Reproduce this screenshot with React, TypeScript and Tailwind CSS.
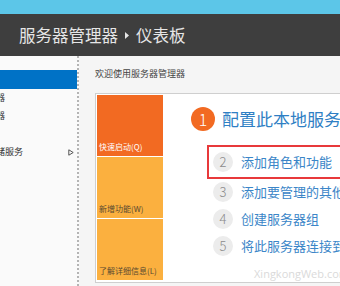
import React from "react";

const font = { fontFamily: '"Noto Sans CJK SC", "Noto Sans", sans-serif' };

function Sidebar() {
  const items = ["仪表板", "本地服务器", "所有服务器", "IIS", "文件和存储服务"];
  return (
    <div className="w-[79px] shrink-0 bg-[#fafafa] border-r-2 border-dotted border-[#b4b4b4] pt-[14px] overflow-hidden">
      {items.map((t, i) => (
        <div
          key={t}
          className={
            "relative h-[18px] flex items-center text-[9px] whitespace-nowrap " +
            (i === 0 ? "bg-[#0072c6] text-white h-[19px]" : "text-[#333]")
          }
        >
          <span className="ml-[-40px]">{t}</span>
          {i === 4 && (
            <svg className="absolute left-[68px] top-[6px]" width="6" height="7" viewBox="0 0 6 7">
              <path d="M0.8 0.8 L5.2 3.5 L0.8 6.2 Z" fill="none" stroke="#555" strokeWidth="1" />
            </svg>
          )}
        </div>
      ))}
    </div>
  );
}

function Tile({ label, color, text }: { label: string; color: string; text: string }) {
  return (
    <div className={"h-[61px] flex items-end px-[2px] pb-[3px] text-[8px] whitespace-nowrap " + color + " " + text}>
      {label}
    </div>
  );
}

function Step({ n, label }: { n: number; label: string }) {
  return (
    <div className="flex items-center h-[20px]">
      <div className="w-[20px] h-[20px] rounded-full bg-[#ececec] text-[#8a8a8a] text-[13px] flex items-center justify-center font-light">
        {n}
      </div>
      <div className="ml-[8px] text-[13px] text-[#3b86c8] whitespace-nowrap">{label}</div>
    </div>
  );
}

export default function App() {
  return (
    <div className="w-[340px] h-[286px] overflow-hidden flex flex-col bg-[#f5f5f5]" style={font}>
      <div className="h-[14px] bg-[#5cc6e8]" />
      <div className="h-[42px] bg-[#3e3e3e] flex items-center pl-[19px] text-[16.5px] text-[#e6e6e6] whitespace-nowrap">
        服务器管理器
        <svg className="mx-[7px]" width="4" height="7" viewBox="0 0 4 7">
          <path d="M0 0 L4 3.5 L0 7 Z" fill="#e6e6e6" />
        </svg>
        仪表板
      </div>
      <div className="flex flex-1 min-h-0">
        <Sidebar />
        <div className="flex-1 min-w-0 pl-[16px] overflow-hidden">
          <div className="h-[37px] flex items-center text-[9px] text-[#444] whitespace-nowrap pb-[1px]">
            欢迎使用服务器管理器
          </div>
          <div className="relative w-[340px] h-[190px] border border-[#cfcfcf] bg-white p-[1px] flex">
            <div className="w-[66px] shrink-0 flex flex-col gap-[1px]">
              <Tile label="快速启动(Q)" color="bg-[#f26a22]" text="text-white" />
              <Tile label="新增功能(W)" color="bg-[#fbb03f]" text="text-[#5a4a30]" />
              <Tile label="了解详细信息(L)" color="bg-[#fbb03f]" text="text-[#5a4a30]" />
            </div>
            <div className="flex-1 pl-[28px] pt-[12px]">
              <div className="flex items-center h-[24px]">
                <div className="w-[24px] h-[24px] rounded-full bg-[#f26a22] text-white text-[16px] font-light flex items-center justify-center">
                  1
                </div>
                <div className="ml-[7px] text-[17px] text-[#2f7fc4] whitespace-nowrap">配置此本地服务器</div>
              </div>
              <div className="mt-[14px] ml-[16px] w-[240px] h-[34px] border-2 border-[#e8393b] flex items-center pl-[4px]">
                <Step n={2} label="添加角色和功能" />
              </div>
              <div className="ml-[22px] mt-[3px] flex flex-col gap-[7px]">
                <Step n={3} label="添加要管理的其他服务器" />
                <Step n={4} label="创建服务器组" />
                <Step n={5} label="将此服务器连接到云服务" />
              </div>
            </div>
            <div className="absolute left-[158px] top-[172px] text-[11px] text-[#dadada] whitespace-nowrap" style={{ fontFamily: '"Open Sans", sans-serif' }}>
              XingkongWeb.com
            </div>
          </div>
        </div>
      </div>
    </div>
  );
}
